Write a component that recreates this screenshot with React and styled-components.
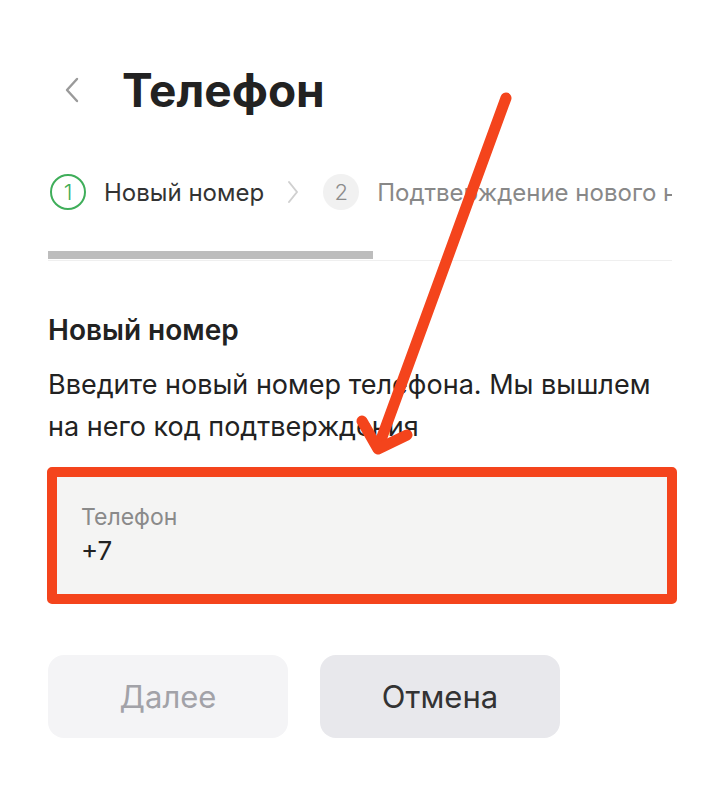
import React from "react";
import styled, { createGlobalStyle } from "styled-components";

const Global = createGlobalStyle`
    html, body {
        margin: 0;
        padding: 0;
        background: #ffffff;
    }
    body {
        font-family: Inter, Roboto, sans-serif;
        color: #222222;
    }
`

const App = () => {
    const steps = [
        { num: 1, label: "Новый номер", active: true },
        { num: 2, label: "Подтверждение нового номера", active: false },
    ]

    return (
        <>
            <Global />
            <Page>
                <Header>
                    <BackButton>
                        <svg width="16" height="26" viewBox="0 0 16 26">
                            <path d="M13 2 L3 13 L13 24" fill="none" stroke="#9a9a9a" strokeWidth="2.4" strokeLinecap="round" strokeLinejoin="round" />
                        </svg>
                    </BackButton>
                    <Title>Телефон</Title>
                </Header>

                <Steps>
                    {steps.map((step, i) => (
                        <React.Fragment key={step.num}>
                            {i > 0 &&
                                <Chevron>
                                    <svg width="12" height="24" viewBox="0 0 12 24">
                                        <path d="M2 2 L10 12 L2 22" fill="none" stroke="#d0d0d0" strokeWidth="2" strokeLinecap="round" strokeLinejoin="round" />
                                    </svg>
                                </Chevron>
                            }
                            <Step>
                                <StepNum active={step.active}>{step.num}</StepNum>
                                <StepLabel active={step.active}>{step.label}</StepLabel>
                            </Step>
                        </React.Fragment>
                    ))}
                </Steps>
                <Progress>
                    <ProgressFill />
                </Progress>

                <Section>
                    <SectionTitle>Новый номер</SectionTitle>
                    <Description>
                        Введите новый номер телефона. Мы вышлем<br />
                        на него код подтверждения
                    </Description>
                </Section>

                <Field>
                    <FieldLabel>Телефон</FieldLabel>
                    <FieldValue>+7</FieldValue>
                </Field>

                <Buttons>
                    <Button disabled>Далее</Button>
                    <Button secondary>Отмена</Button>
                </Buttons>
            </Page>

            <Arrow width="720" height="791" viewBox="0 0 720 791">
                <g fill="none" stroke="#f4441c" strokeWidth="11" strokeLinecap="round" strokeLinejoin="round">
                    <path d="M506 98 L378 448" />
                    <path d="M362 421 L378 449 L407 435" />
                </g>
            </Arrow>
        </>
    )
}

const Page = styled.div`
    width: 624px;
    padding: 62px 48px 40px;
    display: flex;
    flex-direction: column;
`
const Header = styled.div`
    display: flex;
    align-items: center;
    gap: 42px;
    height: 56px;
`
const BackButton = styled.div`
    display: flex;
    align-items: center;
    padding-left: 16px;
`
const Title = styled.h1`
    margin: 0;
    font-size: 46px;
    font-weight: 700;
    color: #222222;
`
const Steps = styled.div`
    margin-top: 56px;
    display: flex;
    align-items: center;
    white-space: nowrap;
    overflow: hidden;
    height: 36px;
`
const Step = styled.div`
    display: flex;
    align-items: center;
    gap: 18px;
    flex-shrink: 0;
`
const StepNum = styled.div`
    width: 36px;
    height: 36px;
    box-sizing: border-box;
    border-radius: 50%;
    display: flex;
    align-items: center;
    justify-content: center;
    font-size: 22px;
    font-weight: 300;
    margin-left: ${p => p.active ? "2px" : "0"};
    color: ${p => p.active ? "#3fae5a" : "#8c8c8c"};
    border: ${p => p.active ? "2px solid #3fae5a" : "none"};
    background: ${p => p.active ? "transparent" : "#f1f1f1"};
`
const StepLabel = styled.span`
    font-size: 24px;
    color: ${p => p.active ? "#333333" : "#888888"};
`
const Chevron = styled.div`
    display: flex;
    align-items: center;
    margin: 0 24px 0 23px;
`
const Progress = styled.div`
    margin-top: 41px;
    height: 9px;
    border-bottom: 1px solid #efefef;
    display: flex;
    align-items: flex-start;
`
const ProgressFill = styled.div`
    width: 325px;
    height: 8px;
    background: #bdbdbd;
`
const Section = styled.div`
    margin-top: 52px;
    display: flex;
    flex-direction: column;
    gap: 17px;
`
const SectionTitle = styled.h2`
    margin: 0;
    font-size: 28px;
    line-height: 34px;
    font-weight: 600;
    color: #222222;
`
const Description = styled.p`
    margin: 0;
    font-size: 27px;
    line-height: 42px;
    white-space: nowrap;
    color: #222222;
`
const Field = styled.div`
    margin-top: 19px;
    margin-left: -1px;
    width: 630px;
    box-sizing: border-box;
    height: 137px;
    border: 10px solid #f4441c;
    border-radius: 5px;
    background: #f4f4f3;
    padding: 26px 24px 0;
    display: flex;
    flex-direction: column;
    gap: 4px;
`
const FieldLabel = styled.span`
    font-size: 23px;
    color: #8a8a8a;
`
const FieldValue = styled.span`
    font-size: 26px;
    color: #222222;
`
const Buttons = styled.div`
    margin-top: 51px;
    display: flex;
    gap: 32px;
`
const Button = styled.button`
    width: 240px;
    height: 83px;
    border: none;
    border-radius: 16px;
    font-family: Inter, Roboto, sans-serif;
    font-size: 31px;
    background: ${p => p.secondary ? "#e8e8ec" : "#f4f4f6"};
    color: ${p => p.disabled ? "#a2a2a8" : "#333333"};
`
const Arrow = styled.svg`
    position: absolute;
    top: 0;
    left: 0;
    pointer-events: none;
`

export default App;
